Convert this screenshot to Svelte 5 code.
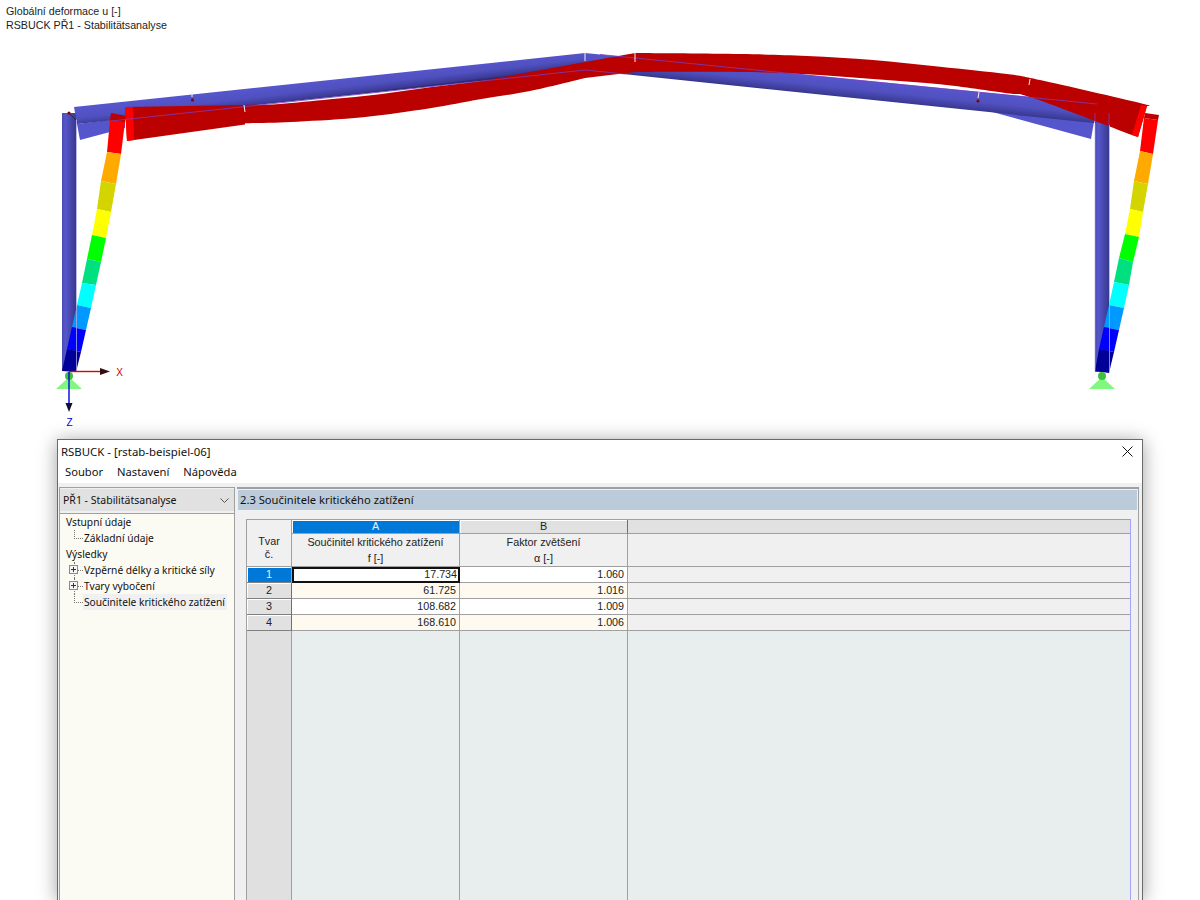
<script>
  const leftEdges = [
    [110, 120, 125, 122], [107, 152, 121, 154], [101, 181, 116, 184], [97, 209, 111, 212],
    [92, 235, 106, 238], [87, 259, 101, 262], [82, 283, 96, 285], [77, 305, 91, 308],
    [72, 327, 86, 330], [67, 349, 81, 352], [62, 371, 76, 372]
  ];
  const rightEdges = [
    [1144, 118, 1158, 120], [1140, 151, 1153, 154], [1134, 181, 1148, 184], [1130, 209, 1143, 212],
    [1125, 234, 1139, 237], [1119, 258, 1133, 262], [1114, 282, 1129, 285], [1109, 305, 1124, 308],
    [1104, 327, 1119, 330], [1099, 349, 1114, 352], [1095, 371, 1109, 373]
  ];
  const scale = ['#ff0000', '#ffaa00', '#d4d400', '#ffff00', '#00ff00', '#00e080', '#00ffff', '#0099ff', '#0000ff', '#000099'];

  function segments(edges) {
    return scale.map((color, i) => {
      const a = edges[i];
      const b = edges[i + 1];
      return { color, points: `${a[0]},${a[1]} ${a[2]},${a[3]} ${b[2]},${b[3]} ${b[0]},${b[1]}` };
    });
  }

  // catmull-rom through the points, the deformed rafter is a curve
  function curve(pts) {
    let d = '';
    for (let i = 0; i < pts.length - 1; i++) {
      const p0 = pts[Math.max(i - 1, 0)];
      const p1 = pts[i];
      const p2 = pts[i + 1];
      const p3 = pts[Math.min(i + 2, pts.length - 1)];
      const c1x = p1[0] + (p2[0] - p0[0]) / 6;
      const c1y = p1[1] + (p2[1] - p0[1]) / 6;
      const c2x = p2[0] - (p3[0] - p1[0]) / 6;
      const c2y = p2[1] - (p3[1] - p1[1]) / 6;
      d += `C${c1x} ${c1y} ${c2x} ${c2y} ${p2[0]} ${p2[1]} `;
    }
    return d;
  }

  const redRafter =
    'M125 107 L245 105 ' +
    curve([[245, 105], [280, 104], [330, 99.3], [380, 94.3], [430, 87.3], [480, 81], [530, 72], [635, 53]]) +
    curve([[635, 53], [740, 54], [807, 56], [873, 60], [940, 66.7], [1007, 74], [1040, 80], [1140, 103], [1147, 106]]) +
    'L1138 137 L1132 135 ' +
    curve([[1132, 135], [1033, 98], [1007, 93.3], [940, 84.3], [873, 79], [807, 74.3], [740, 72], [635, 72]]) +
    'L585 78 ' +
    curve([[585, 78], [530, 91], [480, 99.3], [430, 108.3], [363, 117.3], [297, 121.7], [245, 123.3]]) +
    'L245 124.5 L127 141 Z';

  const ticks = [
    [192, 92, 192, 97], [244, 105, 245, 112], [585, 53, 585, 61], [635, 53, 635, 62],
    [979, 92, 978, 98], [1030, 79, 1029, 85]
  ];
  const dots = [[69, 113], [192.5, 100], [978, 101]];

  const tree = [
    { label: 'Vstupní údaje', level: 0 },
    { label: 'Základní údaje', level: 1, branch: 'end' },
    { label: 'Výsledky', level: 0 },
    { label: 'Vzpěrné délky a kritické síly', level: 1, branch: 'plus' },
    { label: 'Tvary vybočení', level: 1, branch: 'plus' },
    { label: 'Součinitele kritického zatížení', level: 1, branch: 'end', active: true }
  ];

  const rows = [
    { id: 1, f: '17.734', a: '1.060' },
    { id: 2, f: '61.725', a: '1.016' },
    { id: 3, f: '108.682', a: '1.009' },
    { id: 4, f: '168.610', a: '1.006' }
  ];
</script>

<div class="page">
  <div class="view">
    <svg class="model" width="1200" height="439" viewBox="0 0 1200 439">
      <defs>
        <linearGradient id="colGrad" x1="0" y1="0" x2="1" y2="0">
          <stop offset="0" stop-color="#4a4ab4" />
          <stop offset="0.25" stop-color="#5656cc" />
          <stop offset="1" stop-color="#38388e" />
        </linearGradient>
        <linearGradient id="rafterL" gradientUnits="userSpaceOnUse" x1="330" y1="80" x2="332" y2="97">
          <stop offset="0" stop-color="#5656cc" />
          <stop offset="0.5" stop-color="#5050c0" />
          <stop offset="0.92" stop-color="#3a3a94" />
          <stop offset="1" stop-color="#2c2c78" />
        </linearGradient>
        <linearGradient id="rafterR" gradientUnits="userSpaceOnUse" x1="840" y1="78" x2="838" y2="97">
          <stop offset="0" stop-color="#5656cc" />
          <stop offset="0.5" stop-color="#5050c0" />
          <stop offset="0.92" stop-color="#3a3a94" />
          <stop offset="1" stop-color="#2c2c78" />
        </linearGradient>
      </defs>

      <rect x="62" y="113" width="14" height="258" fill="url(#colGrad)" />
      <rect x="1095" y="113" width="14" height="259" fill="url(#colGrad)" />
      <polygon points="77,124 80,140 125,128 125,118" fill="#5555cc" />
      <polygon points="978,108 1091,139 1094,122" fill="#5555cc" />
      <polygon points="74,107 585,53 585,70 77,124" fill="url(#rafterL)" />
      <polygon points="585,53 1097,103.5 1094,123 585,70" fill="url(#rafterR)" />
      <line x1="69" y1="113" x2="76" y2="120" stroke="#222" stroke-width="0.8" />

      {#each segments(leftEdges) as s}
        <polygon points={s.points} fill={s.color} />
      {/each}
      <polygon points="111,113 126,116 125,122 110,120" fill="#bb0000" />
      {#each segments(rightEdges) as s}
        <polygon points={s.points} fill={s.color} />
      {/each}
      <polygon points="1145,113 1159,115 1158,120 1144,118" fill="#bb0000" />

      <path d={redRafter} fill="#bb0000" />
      <polygon points="125,107 133,107 134,140 127,141" fill="#ff0000" />
      <polygon points="1141,105 1147,106 1138,137 1132,135" fill="#ff0000" />

      <g stroke="#7a3cc0" stroke-width="0.8" fill="none">
        <polyline points="111,121 585,70 625,74" />
        <line x1="600" y1="54.5" x2="1097" y2="104" />
        <line x1="1095" y1="113" x2="1095" y2="123" />
        <line x1="1109" y1="113" x2="1109" y2="126" />
      </g>
      <line x1="76.5" y1="120" x2="76.5" y2="371" stroke="#a8a8e0" stroke-width="0.8" />
      <line x1="1095" y1="124" x2="1095" y2="372" stroke="#a8a8e0" stroke-width="0.6" />
      <line x1="1109.5" y1="125" x2="1109.5" y2="372" stroke="#a8a8e0" stroke-width="0.8" />

      {#each ticks as t}
        <line x1={t[0]} y1={t[1]} x2={t[2]} y2={t[3]} stroke="#f0f0f0" stroke-width="1" />
      {/each}
      {#each dots as d}
        <circle cx={d[0]} cy={d[1]} r="1.6" fill="#8b0000" />
      {/each}

      <polygon points="56,389 69,377 82,389" fill="#80f880" />
      <circle cx="69" cy="376" r="4" fill="#40c040" />
      <polygon points="1089,389 1102,377 1115,389" fill="#80f880" />
      <circle cx="1102" cy="376" r="4" fill="#40c040" />

      <line x1="69" y1="371.5" x2="101" y2="371.5" stroke="#e00000" stroke-width="1.4" />
      <polygon points="100,368 110,371.5 100,375" fill="#301010" />
      <line x1="69" y1="372" x2="69" y2="403" stroke="#0000e0" stroke-width="1.4" />
      <polygon points="65.5,403 72.5,403 69,412" fill="#101030" />
      <text class="axis" x="119.5" y="376" text-anchor="middle" fill="#cc0000">X</text>
      <text class="axis" x="69.5" y="426" text-anchor="middle" fill="#0000cc">Z</text>
    </svg>
    <div class="caption">Globální deformace u [-]</div>
    <div class="caption">RSBUCK PŘ1 - Stabilitätsanalyse</div>
  </div>

  <div class="dialog">
    <div class="titlebar">
      <span>RSBUCK - [rstab-beispiel-06]</span>
      <svg class="close" width="11" height="11" viewBox="0 0 11 11">
        <path d="M0.5 0.5L10.5 10.5M10.5 0.5L0.5 10.5" stroke="#111" stroke-width="1" fill="none" />
      </svg>
    </div>
    <div class="menubar">
      <span>Soubor</span>
      <span>Nastavení</span>
      <span>Nápověda</span>
    </div>

    <div class="body">
      <div class="side">
        <div class="combo">
          <span>PŘ1 - Stabilitätsanalyse</span>
          <svg width="9" height="5" viewBox="0 0 9 5">
            <path d="M0.5 0.5L4.5 4.5L8.5 0.5" stroke="#555" stroke-width="1" fill="none" />
          </svg>
        </div>
        <div class="tree">
          {#each tree as item, i}
            <div class="node" class:child={item.level === 1}>
              {#if item.level === 1}
                <span class="guide" class:through={i > 2 && i < 5}></span>
                {#if item.branch === 'plus'}
                  <span class="plus"></span>
                {/if}
              {/if}
              <span class="label" class:active={item.active}>{item.label}</span>
            </div>
          {/each}
        </div>
      </div>

      <div class="main">
        <div class="heading">2.3 Součinitele kritického zatížení</div>
        <div class="sheet">
          <div class="grid">
            <div class="corner">Tvar<br />č.</div>
            <div class="colhead selected">A</div>
            <div class="colhead">B</div>
            <div class="colhead rest"></div>
            <div class="subhead">Součinitel kritického zatížení<br />f [-]</div>
            <div class="subhead">Faktor zvětšení<br />α [-]</div>
            <div class="subhead rest"></div>

            {#each rows as row, i}
              <div class="rowhead" class:selected={i === 0}>{row.id}</div>
              <div class="num" class:even={i % 2 === 1} class:current={i === 0}>{row.f}</div>
              <div class="num" class:even={i % 2 === 1}>{row.a}</div>
              <div class="filler"></div>
            {/each}

            <div class="tail head"></div>
            <div class="tail"></div>
            <div class="tail"></div>
            <div class="tail rest"></div>
          </div>
        </div>
      </div>
    </div>
  </div>
</div>

<style>
  :global(body) {
    margin: 0;
    background: #fff;
  }
  .page {
    width: 1200px;
    height: 900px;
    overflow: hidden;
    display: flex;
    flex-direction: column;
    font-family: "Noto Sans", sans-serif;
    color: #111;
  }
  .view {
    position: relative;
    height: 439px;
    flex: none;
    box-sizing: border-box;
    padding: 4px 6px 0;
  }
  .model {
    position: absolute;
    left: 0;
    top: 0;
  }
  .axis {
    font: 10px "Liberation Sans", sans-serif;
  }
  .caption {
    position: relative;
    font: 10.7px/14px "Liberation Sans", sans-serif;
    color: #222;
  }

  .dialog {
    flex: 1;
    min-height: 0;
    width: 1086px;
    margin-left: 57px;
    box-sizing: border-box;
    border: 1px solid #6a6a6a;
    border-bottom: none;
    background: #f0f0f0;
    box-shadow: 0 2px 18px rgba(0, 0, 0, 0.38);
    display: flex;
    flex-direction: column;
  }
  .titlebar {
    height: 23px;
    flex: none;
    background: #fff;
    display: flex;
    align-items: center;
    justify-content: space-between;
    padding: 0 9px 0 3px;
    font-size: 11.4px;
  }
  .menubar {
    height: 20px;
    flex: none;
    background: #fff;
    display: flex;
    align-items: center;
    gap: 14px;
    padding: 0 0 3px 7px;
    box-sizing: border-box;
    font-size: 11.2px;
  }

  .body {
    flex: 1;
    min-height: 0;
    display: flex;
    gap: 2px;
    padding: 4px 3px 0 1px;
  }
  .side {
    width: 176px;
    flex: none;
    box-sizing: border-box;
    border-top: 1px solid #a0a0a0;
    border-left: 1px solid #a0a0a0;
    border-right: 1px solid #a0a0a0;
    padding-top: 1px;
    display: flex;
    flex-direction: column;
  }
  .combo {
    height: 22px;
    flex: none;
    background: #e1e1e1;
    display: flex;
    align-items: center;
    justify-content: space-between;
    padding: 0 5px 0 3px;
    font-size: 10.5px;
    box-sizing: border-box;
  }
  .tree {
    flex: 1;
    margin-top: 2px;
    border-top: 1px solid #a0a0a0;
    background: #fbfbf3;
    font-size: 10.2px;
  }
  .node {
    position: relative;
    height: 16px;
    line-height: 16px;
    padding-left: 5px;
  }
  .node.child {
    padding-left: 23px;
  }
  .label {
    display: inline-block;
    padding: 0 1px;
    white-space: nowrap;
  }
  .label.active {
    background: #f0f0f0;
    padding-right: 2px;
  }
  .guide {
    position: absolute;
    left: 14px;
    top: 0;
    height: 8px;
    width: 8px;
    border-left: 1px dotted #777;
    border-bottom: 1px dotted #777;
  }
  .guide.through {
    height: 16px;
    border-bottom: none;
  }
  .guide.through::after {
    content: "";
    position: absolute;
    left: 0;
    top: 8px;
    width: 8px;
    border-bottom: 1px dotted #777;
  }
  .plus {
    position: absolute;
    left: 9px;
    top: 3px;
    width: 9px;
    height: 9px;
    box-sizing: border-box;
    border: 1px solid #8a8a8a;
    background:
      linear-gradient(#333, #333) center / 5px 1px no-repeat,
      linear-gradient(#333, #333) center / 1px 5px no-repeat,
      #f6f6f6;
  }

  .main {
    flex: 1;
    min-width: 0;
    box-sizing: border-box;
    border-top: 2px solid #a0a0a0;
    border-right: 1px solid #a0a0a0;
    padding: 1px 1px 0 1px;
    display: flex;
    flex-direction: column;
  }
  .heading {
    height: 20px;
    flex: none;
    background: #bccbd9;
    font-size: 11.2px;
    line-height: 20px;
    padding-left: 2px;
  }
  .sheet {
    flex: 1;
    min-height: 0;
    padding: 9px 6px 0 8px;
  }
  .grid {
    height: 100%;
    box-sizing: border-box;
    display: grid;
    grid-template-columns: 45px 168px 168px 1fr;
    grid-template-rows: 14px 33px repeat(4, 16px) 1fr;
    border-top: 1px solid #a0a0a0;
    border-left: 1px solid #a0a0a0;
    border-right: 1px solid #a4a4ff;
    font: 10.8px/16px "Liberation Sans", sans-serif;
    color: #222;
  }
  .corner {
    grid-row: 1 / span 2;
    background: #f0f0f0;
    text-align: center;
    padding-top: 15px;
    box-sizing: border-box;
    border-right: 1px solid #a0a0a0;
    border-bottom: 1px solid #a0a0a0;
    line-height: 13px;
  }
  .colhead {
    background: #e1e1e1;
    text-align: center;
    line-height: 13px;
    box-sizing: border-box;
    border-right: 1px solid #707070;
    border-bottom: 1px solid #a0a0a0;
    box-shadow: inset 1px 1px 0 #fff;
  }
  .colhead.selected {
    background: #0078d7;
    color: #e8f0f8;
    border-right-color: #a0a0a0;
  }
  .colhead.rest {
    border-right: none;
    box-shadow: none;
  }
  .subhead {
    background: #f0f0f0;
    text-align: center;
    line-height: 16px;
    box-sizing: border-box;
    border-right: 1px solid #a0a0a0;
    border-bottom: 1px solid #a0a0a0;
    padding-top: 0;
  }
  .subhead.rest,
  .filler {
    border-right: none;
  }
  .rowhead {
    background: #e1e1e1;
    text-align: center;
    box-sizing: border-box;
    line-height: 14px;
    border-right: 1px solid #707070;
    border-bottom: 1px solid #808080;
    box-shadow: inset 1px 1px 0 #fff;
  }
  .rowhead.selected {
    background: #0078d7;
    color: #e8f0f8;
    border-right-color: #a0a0a0;
  }
  .num {
    background: #fff;
    text-align: right;
    padding-right: 3px;
    box-sizing: border-box;
    border-right: 1px solid #a0a0a0;
    border-bottom: 1px solid #a0a0a0;
    line-height: 15px;
    font-size: 10.7px;
  }
  .num.even {
    background: #fffaf0;
  }
  .num.current {
    outline: 2px solid #111;
    outline-offset: -2px;
    border: none;
    padding-right: 3px;
  }
  .filler {
    background: #f0f0f0;
    box-sizing: border-box;
    border-bottom: 1px solid #a0a0a0;
  }
  .tail {
    background: #e8eeee;
    box-sizing: border-box;
    border-right: 1px solid #a0a0a0;
  }
  .tail.head {
    background: #e0e0e0;
  }
  .tail.rest {
    border-right: none;
  }
</style>
